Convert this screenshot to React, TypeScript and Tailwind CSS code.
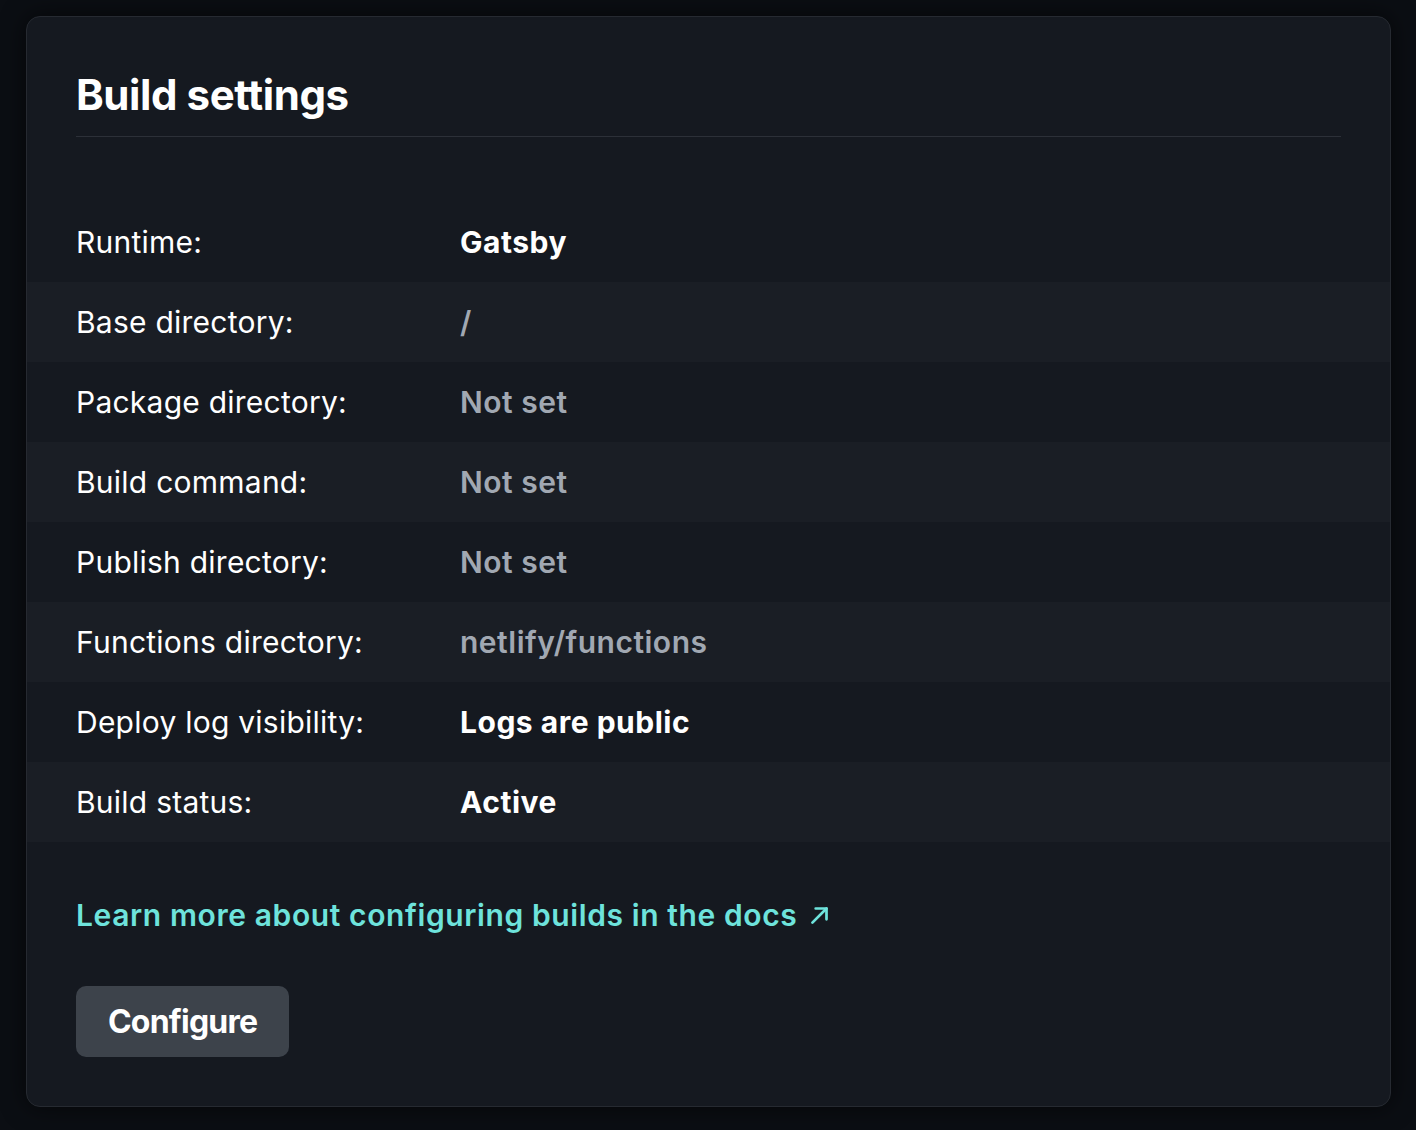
import React from "react";

type Row = { label: string; value: string; muted?: boolean };

const rows: Row[] = [
  { label: "Runtime:", value: "Gatsby" },
  { label: "Base directory:", value: "/", muted: true },
  { label: "Package directory:", value: "Not set", muted: true },
  { label: "Build command:", value: "Not set", muted: true },
  { label: "Publish directory:", value: "Not set", muted: true },
  { label: "Functions directory:", value: "netlify/functions", muted: true },
  { label: "Deploy log visibility:", value: "Logs are public" },
  { label: "Build status:", value: "Active" },
];

function ArrowUpRight() {
  return (
    <svg
      width="26"
      height="26"
      viewBox="0 0 24 24"
      fill="none"
      stroke="currentColor"
      strokeWidth="2.5"
      strokeLinecap="round"
      strokeLinejoin="round"
      className="inline-block ml-[10px] -mt-[6px]"
    >
      <path d="M5 19L18 6" />
      <path d="M8 6h10v10" />
    </svg>
  );
}

export default function App() {
  return (
    <div
      className="min-h-screen bg-[#0b0e13] pt-4 pb-[23px] pl-[26px] pr-[25px]"
      style={{ fontFamily: "Inter, 'Noto Sans', sans-serif" }}
    >
      <div className="rounded-[14px] border border-[#262a31] bg-[#151920] shadow-[0_0_24px_rgba(0,0,0,0.6)] overflow-hidden">
        <div className="px-[49px] pt-[53px]">
          <h1 className="text-[42px] leading-[50px] font-bold text-white tracking-[-0.01em] pb-[16px] border-b border-[#2c3038]">
            Build settings
          </h1>
        </div>

        <div className="mt-[65px]">
          {rows.map((row, i) => (
            <div
              key={row.label}
              className={`flex items-center h-20 px-[49px] ${
                i % 2 === 1 ? "bg-[#1a1e25]" : ""
              }`}
            >
              <div className="w-[384px] shrink-0 text-[30px] tracking-[0.008em] text-white">
                {row.label}
              </div>
              <div
                className={`text-[30px] tracking-[0.017em] ${
                  row.muted
                    ? "font-semibold text-[#a1a8b2]"
                    : "font-bold text-white"
                }`}
              >
                {row.value}
              </div>
            </div>
          ))}
        </div>

        <div className="px-[49px] pt-[55px] pb-[49px]">
          <a
            href="#"
            className="text-[30px] leading-9 font-semibold tracking-[0.02em] text-[#6ee3dc]"
          >
            Learn more about configuring builds in the docs
            <ArrowUpRight />
          </a>
          <div className="mt-[53px]">
            <button className="h-[71px] px-8 rounded-[10px] bg-[#3d434b] text-white text-[32px] tracking-[-0.025em] font-bold">
              Configure
            </button>
          </div>
        </div>
      </div>
    </div>
  );
}
